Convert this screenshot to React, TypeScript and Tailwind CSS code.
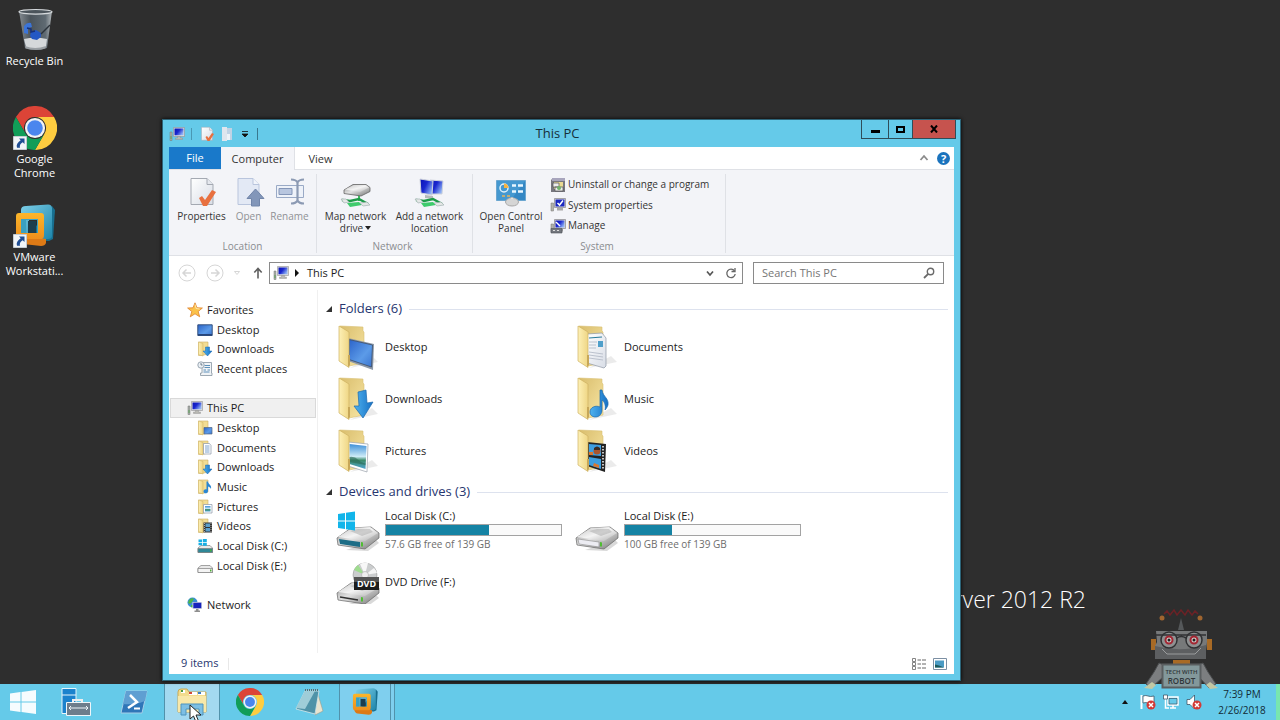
import type { ReactNode } from 'react';

type Kind = 'desktop' | 'documents' | 'downloads' | 'music' | 'pictures' | 'videos';

const folders: { name: string; kind: Kind }[] = [
  { name: 'Desktop', kind: 'desktop' },
  { name: 'Documents', kind: 'documents' },
  { name: 'Downloads', kind: 'downloads' },
  { name: 'Music', kind: 'music' },
  { name: 'Pictures', kind: 'pictures' },
  { name: 'Videos', kind: 'videos' },
];

// Gradients shared by all the icons
function IconDefs() {
  return (
    <svg className="absolute size-0" aria-hidden="true">
      <defs>
        <linearGradient id="leaf" x1="0" x2="1">
          <stop offset="0" stopColor="#fdf0b6" />
          <stop offset="1" stopColor="#efd685" />
        </linearGradient>
        <linearGradient id="back" x1="0" x2="1" y2="1">
          <stop offset="0" stopColor="#d9bd6c" />
          <stop offset="1" stopColor="#f8e6a4" />
        </linearGradient>
        <linearGradient id="screen" x1="0" x2="1" y2="1">
          <stop offset="0" stopColor="#2b63c9" />
          <stop offset="0.6" stopColor="#5c9be8" />
          <stop offset="1" stopColor="#3a74cf" />
        </linearGradient>
        <linearGradient id="crt" x1="0" x2="1" y2="0.6">
          <stop offset="0" stopColor="#0a12b4" />
          <stop offset="0.5" stopColor="#1a27cf" />
          <stop offset="1" stopColor="#8fb2f4" />
        </linearGradient>
        <linearGradient id="arrow" x1="0" x2="1">
          <stop offset="0" stopColor="#4fb2ef" />
          <stop offset="1" stopColor="#1670c4" />
        </linearGradient>
        <linearGradient id="metal" x1="0" x2="1" y2="1">
          <stop offset="0" stopColor="#8f8f8f" />
          <stop offset="0.45" stopColor="#e2e2e2" />
          <stop offset="1" stopColor="#6f6f6f" />
        </linearGradient>
        <linearGradient id="metalTop" x1="0" x2="1" y2="1">
          <stop offset="0" stopColor="#c4c4c4" />
          <stop offset="0.5" stopColor="#f4f4f4" />
          <stop offset="1" stopColor="#b0b0b0" />
        </linearGradient>
        <linearGradient id="photo" x2="0" y2="1">
          <stop offset="0" stopColor="#3d8fd8" />
          <stop offset="0.5" stopColor="#cdebf7" />
          <stop offset="0.65" stopColor="#3c8c6a" />
          <stop offset="1" stopColor="#4ea3cf" />
        </linearGradient>
        <linearGradient id="vmblue" x1="0" x2="1" y2="1">
          <stop offset="0" stopColor="#7dcfe8" />
          <stop offset="1" stopColor="#1e86ab" />
        </linearGradient>
        <linearGradient id="vmorange" x2="0" y2="1">
          <stop offset="0" stopColor="#fbb62a" />
          <stop offset="1" stopColor="#ee8f1c" />
        </linearGradient>
        <linearGradient id="glass" x1="0" x2="1">
          <stop offset="0" stopColor="#8d959c" />
          <stop offset="0.35" stopColor="#4e5860" />
          <stop offset="0.8" stopColor="#65717a" />
          <stop offset="1" stopColor="#c0c6ca" />
        </linearGradient>
        <linearGradient id="paper" x1="0" x2="1" y2="1">
          <stop offset="0" stopColor="#ffffff" />
          <stop offset="1" stopColor="#d8dde6" />
        </linearGradient>
      </defs>
    </svg>
  );
}

function FolderIcon({ kind }: { kind: Kind }) {
  return (
    <svg viewBox="0 0 44 46" className="h-[46px] w-11 shrink-0" aria-hidden="true">
      <path d="M14 44 42 38 36 32Z" fill="#000" opacity="0.08" />
      <path d="M4 2 27 3v4l1 1v31l-15 3Z" fill="url(#back)" stroke="#d8bf72" strokeWidth="0.6" />
      {kind === 'desktop' && (
        <g>
          <path d="m12 14 26 6-1 26-25-9Z" fill="#8d99a8" />
          <path d="m13 15.500 23.500 5.500-1 22L13 35.500Z" fill="url(#screen)" stroke="#3c4c66" strokeWidth="0.8" />
        </g>
      )}
      {kind === 'documents' && (
        <g>
          <path d="m12 10 15-1 4 5v28l-2 2-17-5Z" fill="url(#paper)" stroke="#8e96a3" strokeWidth="0.7" />
          <path d="m14 14 13-1" stroke="#2b7c9c" strokeWidth="1.200" />
          <path d="m14 18 8 0m-8 3 7 0m-7 3 7 0m-7 4 14 2m-14 1 14 2m-14 1 14 2" stroke="#b5bcc8" strokeWidth="0.9" />
          <path d="M23 17h5v6h-5z" fill="#4f9fca" />
        </g>
      )}
      {kind === 'downloads' && (
        <path d="m22 16 8-2 1 13 6-1-10 16-9-12 5 0Z" fill="url(#arrow)" stroke="#1b68ae" strokeWidth="0.700" />
      )}
      {kind === 'music' && (
        <path
          d="M25 14h2c1 7 7 8 6 15-1 3-3 5-3 5 1-5-1-9-3-10v10c0 9-12 9-12 2 0-5 6-7 10-5Z"
          fill="url(#arrow)"
          stroke="#1b68ae"
          strokeWidth="0.700"
        />
      )}
      {kind === 'pictures' && (
        <g>
          <path d="m12 14 20 2-1 28-19-6Z" fill="#fff" stroke="#9aa1aa" strokeWidth="0.700" />
          <path d="m13.500 16 17 2-1 23-16-5Z" fill="url(#photo)" />
          <path d="M13.500 29q5-1 9 3t7 3l0 2-16-3Z" fill="#2c6b58" opacity="0.6" />
        </g>
      )}
      {kind === 'videos' && (
        <g>
          <path d="m12 14 19 2-1 28-18-6Z" fill="#222" />
          <path d="m14 16 12 1v11l-12-1Zm0 13 12 2v10l-12-4Z" fill="#3d9ee0" />
          <circle cx="22" cy="23" r="3.500" fill="#a8552f" />
          <path d="M19 20q3-3 6 0v2h-6Z" fill="#3b2a22" />
          <path d="M14 24h4v3h-4zM19 35l5 2v3l-6-2Z" fill="#d9772f" />
          <path d="M28 18v24" stroke="#eee" strokeWidth="1.600" strokeDasharray="1.500 1.500" />
        </g>
      )}
      <path d="m3 2 10 6v35.500L3 37Z" fill="url(#leaf)" stroke="#cfb262" strokeWidth="0.700" />
      <path d="m12 31 2 0v10l-2 2Z" fill="#c7a758" />
    </svg>
  );
}

function SmallFolder({ kind }: { kind: Kind }) {
  return (
    <svg viewBox="0 0 16 16" className="size-4 shrink-0" aria-hidden="true">
      <path d="M1.500 1h9.500v12l-6 1.500H1.500Z" fill="#f3dd93" stroke="#cdb064" strokeWidth="0.600" />
      <path d="m1.500 1 4.500 1.500V15l-4.500-1.500Z" fill="url(#leaf)" stroke="#cdb064" strokeWidth="0.500" />
      {kind === 'desktop' && <path d="M7 7.500h8V14H7z" fill="url(#screen)" stroke="#57687f" strokeWidth="0.700" />}
      {kind === 'documents' && (
        <g>
          <path d="M6.500 3.500h6l1.500 2V14H6.500z" fill="#fff" stroke="#8a95a6" strokeWidth="0.700" />
          <path d="M8 6h4.500M8 8h4.500M8 10h4.500M8 12h4.500" stroke="#5b8bc0" strokeWidth="0.800" />
        </g>
      )}
      {kind === 'downloads' && (
        <path d="M8.500 6h4v4H15l-4.500 5L6 10h2.500Z" fill="url(#arrow)" stroke="#1b68ae" strokeWidth="0.500" />
      )}
      {kind === 'music' && (
        <path d="M9.500 2.500h1.500c0 3 4 3 3 7.500-1-2-2-2-3-2.500v4.500c0 3-4.500 3-4.500.5 0-2 2-2.500 3-2Z" fill="#2a86d3" />
      )}
      {kind === 'pictures' && (
        <g>
          <path d="M6.500 5.500H15V14H6.500z" fill="#fff" stroke="#8a95a6" strokeWidth="0.700" />
          <path d="M8 7h5.500v5.500H8z" fill="url(#photo)" />
        </g>
      )}
      {kind === 'videos' && (
        <g>
          <path d="M6.500 4.500H15v10H6.500z" fill="#333" />
          <path d="M8.500 5.500H13v3.500H8.500zM8.500 10H13v3.500H8.500z" fill="#5c9fcb" />
          <path d="M14 5v9M7.500 5v9" stroke="#ddd" strokeWidth="0.700" strokeDasharray="1 1" />
        </g>
      )}
    </svg>
  );
}

function PcIcon() {
  return (
    <svg viewBox="0 0 16 16" className="size-4 shrink-0" aria-hidden="true">
      <path d="M1 6h2v8.500H1z" fill="#a9b0aa" stroke="#777" strokeWidth="0.500" />
      <path d="M1.500 10h1v3h-1z" fill="#5da35b" />
      <path d="M4.500 1.500h11v9h-11z" fill="#e3e2dc" stroke="#8f8f96" strokeWidth="0.600" />
      <path d="M5.500 2.500h9v6.800h-9z" fill="url(#crt)" />
      <path d="M8.500 10.500h3V12h2v1.500h-7V12h2z" fill="#b9b9b4" stroke="#8a8a8a" strokeWidth="0.400" />
    </svg>
  );
}

function DriveBody() {
  return (
    <g>
      <path d="m10 42 22 1 11-8-3-3Z" fill="#000" opacity="0.15" />
      <path d="m1 30 14-10 20-1 8 6v5L29 41 2 37Z" fill="url(#metal)" stroke="#666" strokeWidth="0.700" />
      <path d="m2 29 14-9 18-1 8 6-13 8Z" fill="url(#metalTop)" />
      <path d="m14 23 8-2 12 0 3 3-11 4Z" fill="#a8a8a8" opacity="0.5" />
    </g>
  );
}

function DriveIcon({ type }: { type: 'system' | 'disk' | 'dvd' }) {
  return (
    <svg viewBox="0 0 44 44" className="size-11 shrink-0" aria-hidden="true">
      {type === 'dvd' && (
        <g>
          <circle cx="29" cy="15" r="12" fill="#cbcdce" stroke="#9b9b9b" strokeWidth="0.600" />
          <path d="M29 15 18 10a12 12 0 0 1 4-5Z" fill="#9fdc8f" />
          <path d="M29 15 24 4a12 12 0 0 1 8-1Z" fill="#f7f7f7" />
          <path d="m29 15 9-7a12 12 0 0 1 3 5Z" fill="#f5f5f5" />
          <circle cx="29" cy="15" r="3.500" fill="#eee" stroke="#aaa" strokeWidth="0.600" />
        </g>
      )}
      <g transform={type === 'dvd' ? 'translate(0 3)' : undefined}>
        <DriveBody />
        {type === 'system' && <path d="m3 31 21 3v5L4 36Z" fill="#1d6d86" />}
        {type === 'disk' && <path d="m3 31 21 3v5L4 36Z" fill="#ececf2" stroke="#8a8a8a" strokeWidth="0.600" />}
        {type === 'dvd' && <path d="m4 34 18 3" stroke="#333" strokeWidth="1.500" />}
        <path d="m25 34 2 .5v4l-2 0Z" fill="#4fbd32" />
      </g>
      {type === 'system' && (
        <path d="m2 6 7-1v7.500H2Zm8-1.200L19 3.500v9h-9ZM2 13.500h7V21l-7-1Zm8 0h9v9l-9-1.300Z" fill="#12b5ea" />
      )}
      {type === 'dvd' && (
        <g>
          <path d="M18 17h25v13H18z" fill="#1d1d1d" />
          <path d="M18 17h25v5H18z" fill="#555" />
          <text x="30.500" y="27" textAnchor="middle" fontSize="9" fontWeight="700" fill="#fff" fontFamily="Open Sans, sans-serif">
            DVD
          </text>
        </g>
      )}
    </svg>
  );
}

function SmallDrive({ system }: { system?: boolean }) {
  return (
    <svg viewBox="0 0 16 16" className="size-4 shrink-0" aria-hidden="true">
      <path d="m1 10 3-2.500h9L15.500 10v4.500H1Z" fill="#e8e8e8" stroke="#808080" strokeWidth="0.700" />
      <path d="M1 10.500h14.500v4H1z" fill={system ? '#2f8797' : '#f4f4f4'} stroke="#808080" strokeWidth="0.700" />
      <path d="M13 11.500h1.500v2H13z" fill="#4cae35" />
      {system && <path d="M1.500 1.500h3.500V4H1.500zM5.800 1h4v3h-4zM1.500 4.800h3.500v2.500H1.500zM5.800 4.800h4v3h-4z" fill="#18afe4" />}
    </svg>
  );
}

function StarIcon() {
  return (
    <svg viewBox="0 0 16 16" className="size-4 shrink-0" aria-hidden="true">
      <path
        d="m8 .8 2 5 5.400.2-4.200 3.500 1.500 5.300L8 11.800l-4.700 3 1.500-5.300L.6 6 6 5.800Z"
        fill="#fbc24a"
        stroke="#e0812c"
        strokeWidth="0.800"
      />
      <path d="m8 2.500 1.200 4 3.500.5" fill="none" stroke="#fff0bd" strokeWidth="0.800" />
    </svg>
  );
}

function MonitorIcon() {
  return (
    <svg viewBox="0 0 16 16" className="size-4 shrink-0" aria-hidden="true">
      <path d="M.8 2.800h14.400v10.700H.8z" fill="url(#screen)" stroke="#35507e" strokeWidth="1" />
      <path d="M1 12h14v1.500H1z" fill="#27467c" />
    </svg>
  );
}

function RecentIcon() {
  return (
    <svg viewBox="0 0 16 16" className="size-4 shrink-0" aria-hidden="true">
      <path d="M5 1.500h9.500V12H15v2.500H3.500V12H5z" fill="#f0f3f6" stroke="#8794a1" strokeWidth="0.800" />
      <path d="M7.500 4.500h5.500M7.500 6.500h5.500M6.500 9h2.500M10.500 9H13M6.500 11h6" stroke="#4c86b3" strokeWidth="0.900" />
      <circle cx="4" cy="4" r="3.200" fill="#eaf0f5" stroke="#8794a1" strokeWidth="0.800" />
      <path d="M4 2v2h1.500" fill="none" stroke="#456" strokeWidth="0.700" />
    </svg>
  );
}

function NetworkIcon() {
  return (
    <svg viewBox="0 0 16 16" className="size-4 shrink-0" aria-hidden="true">
      <circle cx="5.500" cy="5.500" r="5" fill="#3a8fd6" />
      <path d="M2 3c2-2 4-2 5-1L5 5 3 7 1 6ZM4 8l3 0 0 2-3 .3Z" fill="#4cb54a" />
      <path d="M5.500 5h9.500v7H5.500z" fill="#d9dce4" />
      <path d="M6.300 5.700h8v5.500h-8z" fill="#1723bd" />
      <path d="M9 12h2.500v1.500H13V15H7.500v-1.500H9z" fill="#8f8f8f" />
    </svg>
  );
}

function ChromeIcon({ className }: { className: string }) {
  const sector = 'M3.200 12A24 24 0 0 1 44.800 12H24A12 12 0 0 0 13.600 30Z';
  return (
    <svg viewBox="0 0 48 48" className={className} aria-hidden="true">
      <path d={sector} fill="#dc4437" />
      <path d={sector} fill="#fecd40" transform="rotate(120 24 24)" />
      <path d={sector} fill="#119d58" transform="rotate(240 24 24)" />
      <circle cx="24" cy="24" r="11" fill="#f3f3f3" />
      <circle cx="24" cy="24" r="8.500" fill="#4a86ee" />
    </svg>
  );
}

function VmwareIcon({ className }: { className: string }) {
  return (
    <svg viewBox="0 0 44 44" className={className} aria-hidden="true">
      <path d="m12 36 24 1 4-2 2-29-3-4Z" fill="#176f90" />
      <path
        fillRule="evenodd"
        d="M13 2 35 .5q4 0 4 4V32q0 3-4 3H12q-4 0-4-4V6q0-4 5-4Zm3 9v18h14V11Z"
        fill="url(#vmblue)"
      />
      <path d="M5 34h22l6 1v4q-1 3-5 3l-18-2q-3 0-5-6Z" fill="#dd7a16" />
      <path
        fillRule="evenodd"
        d="M6 9h22q3 0 3 3v19q0 4-3 4H6q-3 0-3-4V12q0-3 3-3Zm2 6v14h17V15Z"
        fill="url(#vmorange)"
      />
      <path fillRule="evenodd" d="M8 15h17v14H8Zm5 1v13h11V16Z" fill="#3aa0c1" />
      <path d="M15 17h8v12h-8z" fill="#1c3d4d" />
    </svg>
  );
}

function ShortcutBadge() {
  return (
    <svg viewBox="0 0 14 14" className="absolute bottom-0 left-0 size-3.5" aria-hidden="true">
      <path d="M.5.5h13v13H.5z" fill="#f1f5f8" stroke="#c4ccd2" />
      <path d="M6 2.500h5.500V8L9.700 6.300C7 8 6.500 9.500 7 11.800H4C3 9 4.500 6.500 7.700 4.300Z" fill="#1f4e94" />
    </svg>
  );
}

function RecycleBinIcon() {
  return (
    <svg viewBox="0 0 44 44" className="size-11" aria-hidden="true">
      <path d="M6 3h33l-5 37q-12 4-22 0Z" fill="url(#glass)" opacity="0.9" />
      <path d="M11 31q11-3 23 0l-1 8q-10 4-20 0Z" fill="#d5d8da" />
      <path d="M12 38q10 4 21 0l-.5 2.500q-9 3-20 0Z" fill="#9a9fa3" />
      <path d="M11 18q3-4 7-3l1 4-4 1 0 6-4-1Z" fill="#3b74d8" />
      <path d="m18 24 5-2 5 3 0 4-4 3-5-1-2-3Z" fill="#2458c4" />
      <path d="m14 20 4 1 0 3 4-1" fill="none" stroke="#16307a" strokeWidth="1.500" />
      <path d="m28 26 9-9" stroke="#2b323a" strokeWidth="1.500" />
      <ellipse cx="22.500" cy="3.800" rx="16.500" ry="2.300" fill="#4b545b" stroke="#d6dadd" strokeWidth="1.200" />
    </svg>
  );
}

function PropertiesIcon({ className }: { className: string }) {
  return (
    <svg viewBox="0 0 32 32" className={className} aria-hidden="true">
      <path d="M5 2.500h16l6 6v20H5z" fill="url(#paper)" stroke="#a4a9b2" />
      <path d="M21 2.500v6h6" fill="#e5e8ee" stroke="#a4a9b2" />
      <path d="m13 22 3-2 3 4 7-10 4 2-9 14h-4Z" fill="#e8703f" />
    </svg>
  );
}

function OpenIcon() {
  return (
    <svg viewBox="0 0 32 32" className="size-8" aria-hidden="true">
      <path d="M5 2.500h15l6 6v20H5z" fill="#e3e9f5" stroke="#b9c5dd" />
      <path d="M20 2.500v6h6" fill="#f2f5fb" stroke="#b9c5dd" />
      <path d="m22.500 13 8.500 9.500h-4.500V30h-8v-7.500H14Z" fill="#8296b9" stroke="#7185a9" />
    </svg>
  );
}

function RenameIcon() {
  return (
    <svg viewBox="0 0 32 32" className="size-8" aria-hidden="true">
      <path d="M2.500 9.500h27v12h-27z" fill="#eef2f9" stroke="#9aaac6" />
      <path d="M5 12.500h13v6H5z" fill="#b8c6df" stroke="#8496b8" />
      <path d="M17 3.500q5 0 6.500 3 1.500-3 6.500-3M17 27.500q5 0 6.500-3 1.500 3 6.500 3M23.500 6v19" fill="none" stroke="#8c9ab3" strokeWidth="2.200" />
    </svg>
  );
}

function Cable() {
  return (
    <g>
      <path d="m2 24 8 1 9-2 9 5" fill="none" stroke="#1e9b49" strokeWidth="2.500" />
      <path d="m7 27 12-1 3 3-12 2Z" fill="#3ecb6c" />
      <path d="m1 23 5 0 3 3-5 1ZM20 27l7-1 3 3-7 1Z" fill="#e4e7e6" stroke="#9aa" strokeWidth="0.600" />
    </g>
  );
}

function MapDriveIcon() {
  return (
    <svg viewBox="0 0 32 32" className="size-8" aria-hidden="true">
      <path d="M19 17v8" stroke="#3cbf5d" strokeWidth="2" />
      <path d="m4 14 9-5.500 13 0 4 3v4L21 20 4 17.500Z" fill="url(#metal)" stroke="#666" strokeWidth="0.800" />
      <path d="m5 13.500 9-4.500h11l4 2.500-9 4.500Z" fill="url(#metalTop)" />
      <Cable />
    </svg>
  );
}

function AddNetworkIcon() {
  return (
    <svg viewBox="0 0 32 32" className="size-8" aria-hidden="true">
      <path d="m16 4 13 1-1 13-11 0Z" fill="url(#crt)" stroke="#cfd3dc" />
      <path d="m6 3 13 2-1 14L7 17Z" fill="url(#crt)" stroke="#cfd3dc" />
      <path d="m11 19 8 1 0 3-8-1Z" fill="#b5b9bb" />
      <Cable />
    </svg>
  );
}

function ControlPanelIcon() {
  return (
    <svg viewBox="0 0 32 32" className="size-8" aria-hidden="true">
      <path d="M1.500 4.500h29v20h-29z" fill="#3487c4" stroke="#6ba6d0" />
      <path d="M2 5h28L16 24H2z" fill="#4598d0" />
      <circle cx="9" cy="12" r="4" fill="none" stroke="#dff1fb" strokeWidth="1.500" />
      <path d="M9 12V7.500A4.500 4.500 0 0 1 13.500 12Z" fill="#f7b443" />
      <path d="M17 9.500h4M23 9.500h5M17 15.500h4M23 15.500h5" stroke="#e8f6ff" strokeWidth="2.500" />
      <path d="M7 20h3M12 20h3" stroke="#e7b45b" strokeWidth="1.500" />
      <ellipse cx="17" cy="26" rx="6.500" ry="4" fill="#d5d5d5" stroke="#a8a8a8" />
      <path d="M14 23q3-3 6 0" fill="#eee" stroke="#bbb" />
    </svg>
  );
}

function SystemIcon({ kind }: { kind: 'uninstall' | 'properties' | 'manage' }) {
  return (
    <svg viewBox="0 0 16 16" className="size-4 shrink-0" aria-hidden="true">
      {kind === 'uninstall' && (
        <g>
          <path d="M1 2.500h14V15H1z" fill="#77777f" />
          <path d="M2 1h13v3H2z" fill="#a8a5bd" />
          <path d="M4 5h9v7H4z" fill="#e9d992" />
          <path d="M3 6h6v4H3zM5 10h8v4H5z" fill="#ececec" stroke="#555" strokeWidth="0.700" />
          <circle cx="9" cy="11" r="2" fill="#6fb26a" />
        </g>
      )}
      {kind !== 'uninstall' && (
        <g>
          <path d="M1 6h2.500v8H1z" fill="#b3b3ab" stroke="#777" strokeWidth="0.500" />
          <path d="M4.500 1.500h11v9h-11z" fill="#dcdbd6" stroke="#85858c" strokeWidth="0.700" />
          <path d="M5.500 2.500h9v7h-9z" fill={kind === 'manage' ? 'url(#crt)' : '#1a27c0'} />
          <path d="M7 11h6v2.500H7z" fill="#a9a9a9" />
        </g>
      )}
      {kind === 'properties' && <path d="m7.500 6 2 2 3.500-4.500" fill="none" stroke="#fff" strokeWidth="1.500" />}
      {kind === 'manage' && (
        <g>
          <path d="M1 10.500h11V15H1z" fill="#73777e" stroke="#4f5257" strokeWidth="0.600" />
          <path d="M3 12.500h2M7 12.500h2" stroke="#ddd" />
          <path d="m6 4 4 4" stroke="#fff" strokeWidth="1.500" />
        </g>
      )}
    </svg>
  );
}

function RobotLogo() {
  return (
    <svg viewBox="0 0 78 82" className="absolute right-[60px] bottom-[-6px] z-10 h-[82px] w-[78px]" aria-hidden="true">
      <path d="m22 6 3-3 3 4 4-5 3 5 4-5 4 5 3-5 4 5 3-4 3 3" fill="none" stroke="#6b2226" strokeWidth="1.500" />
      <circle cx="20" cy="10" r="2.500" fill="#a0652f" />
      <circle cx="58" cy="10" r="2.500" fill="#a0652f" />
      <path d="m36 22 3-12 3 12Z" fill="#55585a" />
      <path d="M9 31h5v11H9zM65 31h5v11h-5z" fill="#a86a25" />
      <path d="M14 23h51v11l-2 17H13V38l2-4Z" fill="#77797a" />
      <path d="M13 38q26 7 51-1v14H13Z" fill="#5d5f61" />
      <path d="m20 41 5 5h28l6-6" fill="none" stroke="#9a9c9d" />
      <g fill="#8f9192" stroke="#303133" strokeWidth="1.500">
        <circle cx="27" cy="32" r="8" />
        <circle cx="52" cy="32" r="8" />
        <path d="M14 27h50M35 30q4-3 9 0" fill="none" />
      </g>
      <g fill="#d6cfcf" stroke="#a32632" strokeWidth="2">
        <circle cx="27" cy="32" r="3.500" />
        <circle cx="52" cy="32" r="3.500" />
      </g>
      <circle cx="27" cy="32" r="1.500" fill="#222" />
      <circle cx="52" cy="32" r="1.500" fill="#222" />
      <path d="M31 52h17v6H31z" fill="#a86a25" />
      <path d="m17 55 7 3-3 11-12 11-5-4 8-12ZM61 55l-7 3 3 11 10 11 7-4-8-12Z" fill="#7c7e80" stroke="#4b4d4f" />
      <path d="m2 80 8-6 4 3-4 4ZM76 80l-8-6-4 3 4 4Z" fill="#c3c8a4" />
      <path d="M20.500 56.500h38v23h-38z" fill="#83989b" stroke="#5a5e60" strokeWidth="2" />
      <g textAnchor="middle" fontFamily="Open Sans, sans-serif" fontWeight="600" fill="#303639">
        <text x="39.500" y="66" fontSize="6">
          TECH WITH
        </text>
        <text x="39.500" y="76" fontSize="8">
          ROBOT
        </text>
      </g>
    </svg>
  );
}

function DesktopIcon({ label, shortcut, children }: { label: string; shortcut?: boolean; children: ReactNode }) {
  return (
    <button className="flex h-[98px] w-full flex-col items-center gap-0.5 text-[11px] leading-[14px] text-white">
      <span className="relative size-11">
        {children}
        {shortcut && <ShortcutBadge />}
      </span>
      <span className="px-1">{label}</span>
    </button>
  );
}

function RibbonGroup({ label, className, children }: { label: string; className: string; children: ReactNode }) {
  return (
    <section className={`flex flex-col justify-between border-r border-[#dfe1e6] ${className}`}>
      <div className="flex h-[62px] justify-center">{children}</div>
      <h2 className="text-center text-[10px] leading-[14px] text-[#8a8c90]">{label}</h2>
    </section>
  );
}

function RibbonButton({
  icon,
  disabled,
  className,
  children,
}: {
  icon: ReactNode;
  disabled?: boolean;
  className: string;
  children: ReactNode;
}) {
  return (
    <button
      disabled={disabled}
      className={`flex shrink-0 flex-col items-center gap-0.5 pt-0.5 text-[10px] leading-3 whitespace-nowrap text-[#333] disabled:text-[#8f9195] ${className}`}
    >
      {icon}
      <span>{children}</span>
    </button>
  );
}

function NavItem({
  icon,
  root,
  selected,
  children,
}: {
  icon: ReactNode;
  root?: boolean;
  selected?: boolean;
  children: ReactNode;
}) {
  return (
    <li className="flex">
      <a
        href="#"
        aria-current={selected ? 'page' : undefined}
        className={`flex flex-1 items-center gap-1 border ${root ? 'pl-4' : 'pl-[26px]'} ${
          selected ? 'border-[#d9d9d9] bg-[#f0f0f0]' : 'border-transparent'
        }`}
      >
        {icon}
        {children}
      </a>
    </li>
  );
}

function SectionTitle({ children }: { children: ReactNode }) {
  return (
    <h2 className="mb-0.5 flex h-5 items-center gap-[7px] text-[13px] text-[#27366f]">
      <svg viewBox="0 0 6 6" className="size-1.5" aria-hidden="true">
        <path d="M6 0v6H0Z" fill="#333" />
      </svg>
      {children}
      <span className="h-px flex-1 bg-[#dde2ee]" />
    </h2>
  );
}

function Drive({ name, free, used }: { name: string; free: string; used: number }) {
  return (
    <a href="#" className="flex h-[52px] items-center gap-[5px]">
      <DriveIcon type={name.includes('C:') ? 'system' : 'disk'} />
      <span className="w-[177px]">
        <span className="block leading-4">{name}</span>
        <span
          role="progressbar"
          aria-label={name}
          aria-valuenow={used}
          className="block h-3 border border-[#a3a3a3] bg-[#fafafa]"
        >
          <span className="block h-full bg-[#1583a4]" style={{ width: `${used}%` }} />
        </span>
        <span className="block text-[10px] leading-4 text-[#6d6d6d]">{free}</span>
      </span>
    </a>
  );
}

function ExplorerWindow() {
  return (
    <main className="absolute top-[119px] left-[162px] z-10 w-[799px] border border-[#2c6478] bg-[#65cae9] text-[11px] text-[#1c1c1c] shadow-[0_0_4px_#000]">
      <header className="flex h-[27px] text-black">
        <div className="flex w-[97px] items-center gap-1 pl-1.5">
          <PcIcon />
          <span className="mr-[3px] ml-0.5 h-3 w-px shrink-0 bg-[#4a98b3]" />
          <button aria-label="Properties" className="shrink-0">
            <PropertiesIcon className="size-4" />
          </button>
          <button aria-label="New folder" className="shrink-0">
            <svg viewBox="0 0 16 16" className="size-4">
              <path d="M3 1h5v14H3z" fill="#dfe6ee" />
              <path d="M8 2h5v12H8z" fill="#c0d3e5" />
              <path d="M8 8h3v6H8z" fill="#eef3f8" />
            </svg>
          </button>
          <button aria-label="Customize Quick Access Toolbar" className="ml-0.5 shrink-0">
            <svg viewBox="0 0 8 8" className="size-2">
              <path d="M1 1.500h6M1 4h6L4 7Z" fill="#111" stroke="#111" strokeWidth="0.800" />
            </svg>
          </button>
          <span className="ml-1 h-3 w-px shrink-0 bg-[#39788f]" />
        </div>
        <h1 className="flex-1 pr-1.5 text-center text-[13px] leading-[27px] text-[#16303a]">This PC</h1>
        <div className="mr-1 flex h-[19px] border border-t-0 border-[#2f4d59]">
          <button aria-label="Minimize" className="flex w-[26px] items-center justify-center pt-1">
            <span className="h-[3px] w-[9px] bg-black" />
          </button>
          <button aria-label="Maximize" className="flex w-[25px] items-center justify-center border-x border-[#2f4d59]">
            <span className="h-[7px] w-[9px] border-2 border-black" />
          </button>
          <button aria-label="Close" className="flex w-[42px] items-center justify-center bg-[#c6534e]">
            <svg viewBox="0 0 8 8" className="size-2">
              <path d="m1 .5 6 7M7 .5l-6 7" stroke="#000" strokeWidth="2" />
            </svg>
          </button>
        </div>
      </header>

      <div className="mx-1.5 mb-1.5 bg-white">
        <div className="flex h-[23px] items-stretch border-b border-[#dfe1e6]">
          <button className="w-[52px] bg-[#1979ca] text-white">File</button>
          <button className="-mb-px w-[74px] border-r border-[#dfe1e6] bg-[#f3f4f8] pt-0.5 text-[#333]">Computer</button>
          <button className="w-[51px] pt-0.5 text-[#333]">View</button>
          <div className="ml-auto flex items-center gap-2 pr-1">
            <button aria-label="Minimize the Ribbon">
              <svg viewBox="0 0 10 10" className="size-2.5">
                <path d="M1.500 7 5 3l3.500 4" fill="none" stroke="#8b8b8b" strokeWidth="1.800" />
              </svg>
            </button>
            <button aria-label="Help" className="size-[13px] rounded-full bg-[#1b73bd] text-[11px] leading-[13px] font-bold text-white">
              ?
            </button>
          </div>
        </div>

        <div className="flex h-[86px] border-b border-[#dfe1e6] bg-[#f3f4f8] pt-1 pb-0.5">
          <RibbonGroup label="Location" className="w-[148px]">
            <RibbonButton className="w-14" icon={<PropertiesIcon className="size-8" />}>
              Properties
            </RibbonButton>
            <RibbonButton disabled className="w-[38px]" icon={<OpenIcon />}>
              Open
            </RibbonButton>
            <RibbonButton disabled className="w-11" icon={<RenameIcon />}>
              Rename
            </RibbonButton>
          </RibbonGroup>
          <RibbonGroup label="Network" className="w-[156px] pr-1">
            <RibbonButton className="w-[74px]" icon={<MapDriveIcon />}>
              Map network
              <br />
              <span className="inline-flex items-center gap-0.5">
                drive
                <svg viewBox="0 0 6 4" className="h-1 w-1.5" aria-hidden="true">
                  <path d="M0 0h6L3 4Z" fill="#222" />
                </svg>
              </span>
            </RibbonButton>
            <RibbonButton className="w-[74px]" icon={<AddNetworkIcon />}>
              Add a network
              <br />
              location
            </RibbonButton>
          </RibbonGroup>
          <RibbonGroup label="System" className="w-[253px] pr-1">
            <RibbonButton className="w-[72px]" icon={<ControlPanelIcon />}>
              Open Control
              <br />
              Panel
            </RibbonButton>
            <div className="flex w-[172px] flex-col pl-[3px] text-[10px] text-[#333]">
              <button className="flex h-[21px] items-center gap-0.5 whitespace-nowrap">
                <SystemIcon kind="uninstall" />
                Uninstall or change a program
              </button>
              <button className="flex h-5 items-center gap-0.5">
                <SystemIcon kind="properties" />
                System properties
              </button>
              <button className="flex h-[21px] items-center gap-0.5">
                <SystemIcon kind="manage" />
                Manage
              </button>
            </div>
          </RibbonGroup>
        </div>

        <div className="flex h-[34px] items-center pr-2.5 pl-[9px]">
          <button aria-label="Back" disabled>
            <svg viewBox="0 0 18 18" className="size-[18px]">
              <circle cx="9" cy="9" r="8" fill="none" stroke="#d6d6d6" />
              <path d="M13 9H5.500M8.500 5.500 5 9l3.500 3.500" fill="none" stroke="#d6d6d6" strokeWidth="1.500" />
            </svg>
          </button>
          <button aria-label="Forward" disabled className="ml-2.5">
            <svg viewBox="0 0 18 18" className="size-[18px]">
              <circle cx="9" cy="9" r="8" fill="none" stroke="#d6d6d6" />
              <path d="M5 9h7.500M9.500 5.500 13 9l-3.500 3.500" fill="none" stroke="#d6d6d6" strokeWidth="1.500" />
            </svg>
          </button>
          <button aria-label="Recent locations" className="ml-2.5">
            <svg viewBox="0 0 6 6" className="size-1.5">
              <path d="M.5 1.500h5L3 4.500Z" fill="none" stroke="#ccc" strokeWidth="0.800" />
            </svg>
          </button>
          <button aria-label="Up" className="ml-3">
            <svg viewBox="0 0 12 12" className="size-3">
              <path d="M6 11.500V1.500M2.300 5.500 6 1.500l3.700 4" fill="none" stroke="#5f5f5f" strokeWidth="1.600" />
            </svg>
          </button>
          <div className="ml-[5px] flex h-[22px] flex-1 items-center border border-[#8a8a8a] pr-[5px] pl-[3px]">
            <PcIcon />
            <svg viewBox="0 0 6 8" className="ml-[5px] h-2 w-1.5" aria-hidden="true">
              <path d="m1 0 4 4-4 4Z" fill="#111" />
            </svg>
            <span className="ml-[7px] flex-1">This PC</span>
            <button aria-label="Previous locations">
              <svg viewBox="0 0 10 10" className="size-2.5">
                <path d="M2 3.500 5 7l3-3.500" fill="none" stroke="#555" strokeWidth="1.700" />
              </svg>
            </button>
            <button aria-label="Refresh" className="ml-2.5">
              <svg viewBox="0 0 12 12" className="size-3">
                <path d="M9.500 4A4.200 4.200 0 1 0 10.200 7" fill="none" stroke="#666" strokeWidth="1.300" />
                <path d="M6.500 4.500H10V1" fill="none" stroke="#666" strokeWidth="1.300" />
              </svg>
            </button>
          </div>
          <label className="ml-2.5 flex h-[22px] w-[191px] items-center border border-[#8a8a8a] px-2">
            <input
              type="search"
              aria-label="Search This PC"
              placeholder="Search This PC"
              className="min-w-0 flex-1 bg-transparent outline-none placeholder:text-[#767676]"
            />
            <svg viewBox="0 0 12 12" className="size-3" aria-hidden="true">
              <circle cx="7.500" cy="4.500" r="3.200" fill="none" stroke="#6a6a6a" strokeWidth="1.400" />
              <path d="M5.200 6.800 1 11" stroke="#6a6a6a" strokeWidth="1.800" />
            </svg>
          </label>
        </div>

        <div className="flex h-[363px]">
          <nav aria-label="Folders" className="w-[149px] border-r border-[#f0f0f0] pt-2.5 pr-px pl-px">
            <ul className="grid h-[315px] grid-rows-[repeat(16,1fr)] leading-4">
              <NavItem root icon={<StarIcon />}>
                Favorites
              </NavItem>
              <NavItem icon={<MonitorIcon />}>Desktop</NavItem>
              <NavItem icon={<SmallFolder kind="downloads" />}>Downloads</NavItem>
              <NavItem icon={<RecentIcon />}>Recent places</NavItem>
              <li aria-hidden="true" />
              <NavItem root selected icon={<PcIcon />}>
                This PC
              </NavItem>
              {folders.map((f) => (
                <NavItem key={f.kind} icon={<SmallFolder kind={f.kind} />}>
                  {f.name}
                </NavItem>
              ))}
              <NavItem icon={<SmallDrive system />}>Local Disk (C:)</NavItem>
              <NavItem icon={<SmallDrive />}>Local Disk (E:)</NavItem>
              <li aria-hidden="true" />
              <NavItem root icon={<NetworkIcon />}>
                Network
              </NavItem>
            </ul>
          </nav>

          <div className="flex-1 pt-[9px] pr-1.5 pl-2">
            <SectionTitle>Folders (6)</SectionTitle>
            <div className="mb-[5px] grid grid-cols-[239px_239px] pl-2.5">
              {folders.map((f) => (
                <a key={f.kind} href="#" className="flex h-[52px] items-center gap-[5px]">
                  <FolderIcon kind={f.kind} />
                  {f.name}
                </a>
              ))}
            </div>
            <SectionTitle>Devices and drives (3)</SectionTitle>
            <div className="grid grid-cols-[239px_239px] pl-2.5">
              <Drive name="Local Disk (C:)" free="57.6 GB free of 139 GB" used={59} />
              <Drive name="Local Disk (E:)" free="100 GB free of 139 GB" used={27} />
              <a href="#" className="flex h-[52px] items-center gap-[5px]">
                <DriveIcon type="dvd" />
                DVD Drive (F:)
              </a>
            </div>
          </div>
        </div>

        <footer className="flex h-[21px] items-center pr-[7px] pl-3 text-[#27366f]">
          <span>9 items</span>
          <span className="ml-2.5 h-3 w-px bg-[#e8e8e8]" />
          <button aria-label="Details" className="ml-auto">
            <svg viewBox="0 0 14 12" className="h-3 w-3.5">
              <path d="M.5.5h3v3h-3zM.5 4.500h3v3h-3zM.5 8.500h3v3h-3z" fill="none" stroke="#777" strokeWidth="0.900" />
              <path d="M5.500 2h3.500M10 2h4M5.500 6h3.500M10 6h4M5.500 10h3.500M10 10h4" stroke="#666" />
            </svg>
          </button>
          <button aria-label="Large icons" className="ml-[7px]">
            <svg viewBox="0 0 14 12" className="h-3 w-3.5">
              <path d="M.5.5h13v11H.5z" fill="#fff" stroke="#7c8fa3" />
              <path d="M2 2.500h9v7H2z" fill="#4a9bc4" />
              <path d="m2 9.500 0-3 4 1 5 2Z" fill="#1c5a5c" />
            </svg>
          </button>
        </footer>
      </div>
    </main>
  );
}

function Taskbar() {
  return (
    <footer className="relative flex h-9 items-stretch bg-[#65cae9] text-[#132b35]">
      <button aria-label="Start" className="flex w-[46px] items-center justify-center">
        <svg viewBox="0 0 26 24" className="h-6 w-[26px]">
          <path d="m0 3.500 10.500-1.500v9.500H0Zm11.500-1.600L26 0v11.500H11.500ZM0 12.500h10.500V22L0 20.500Zm11.500 0H26V24l-14.500-1.900Z" fill="#f6fcfe" />
        </svg>
      </button>
      <button aria-label="Server Manager" className="flex w-[60px] items-center justify-center">
        <svg viewBox="0 0 30 30" className="size-[30px]">
          <path d="M1 1.500h14v25H1z" fill="#1b82cd" stroke="#e6f5fb" />
          <path d="M1 8h14" stroke="#e6f5fb" />
          <path d="M12 15v-2h9v2" fill="none" stroke="#eee" strokeWidth="2" />
          <path d="M5.500 15.500h24v13h-24z" fill="#6d7d8c" stroke="#eef6fa" />
          <path d="M8 21h19m-17-2-2 2 2 2m15-4 2 2-2 2" fill="none" stroke="#eef6fa" />
        </svg>
      </button>
      <button aria-label="Windows PowerShell" className="flex w-14 items-center justify-center">
        <svg viewBox="0 0 28 24" className="h-6 w-7">
          <path d="M6 1h21l-5 22H1Z" fill="#2f76b8" stroke="#a6cfe8" />
          <path d="M6 1h21l-2 10q-10 4-22 3Z" fill="#5f9fd2" />
          <path d="m10 5 7 7-9 6" fill="none" stroke="#fff" strokeWidth="2.500" />
          <path d="M14 18.500h6" stroke="#fff" strokeWidth="2" />
        </svg>
      </button>
      <button
        aria-label="File Explorer"
        className="ml-0.5 flex w-14 items-center justify-center border-x border-[#5192ab] bg-[#a3d9f0]"
      >
        <svg viewBox="0 0 32 30" className="h-[30px] w-8">
          <path d="M2 5q0-3 3-3h6l2 3h17v20H2Z" fill="#f2dc8d" stroke="#c9a957" />
          <path d="M5 3h4v3H5zM13 5h8v3h-8zM22 5h7v3h-7z" fill="#fff" />
          <path d="M5 3h2v2H5z" fill="#4c9d45" />
          <path d="M13 5h3v2h-3z" fill="#d24a38" />
          <path d="M22 5h3v2h-3z" fill="#3b7dc1" />
          <path d="M2 9h28v16H2z" fill="#f8e8a9" />
          <path d="M5 17h22v11h-4v-6H10v6H5z" fill="#7dbfe4" stroke="#4f94bd" />
        </svg>
      </button>
      <button aria-label="Google Chrome" className="flex w-[60px] items-center justify-center">
        <ChromeIcon className="size-7" />
      </button>
      <button aria-label="Notepad" className="flex w-[59px] items-center justify-center">
        <svg viewBox="0 0 30 28" className="h-7 w-[30px]">
          <path d="m22 3 6 20-8 4Z" fill="#e8e4cf" stroke="#9c9c8b" strokeWidth="0.600" />
          <path d="M10 3h14l-4 23-19-5Z" fill="#4f93a8" stroke="#d5e8ec" strokeWidth="0.800" />
          <path d="m10 3 10 0-10 18-9-1Z" fill="#9fcdd8" />
          <path d="M10 2h14" stroke="#5c6a6e" strokeWidth="2" strokeDasharray="1 1" />
        </svg>
      </button>
      <button
        aria-label="VMware Workstation"
        className="flex w-[52px] items-center justify-center border-x border-[#5192ab] bg-[#7fcfee]"
      >
        <VmwareIcon className="size-7" />
      </button>
      <span className="w-1 border-r border-[#5192ab] bg-[#7fcfee]" />

      <div className="ml-auto flex items-center gap-[7px]">
        <button aria-label="Show hidden icons" className="mr-1">
          <svg viewBox="0 0 8 6" className="h-1.5 w-2">
            <path d="M1 5h6L4 1Z" fill="#111" />
          </svg>
        </button>
        <svg viewBox="0 0 16 16" className="size-4" aria-label="Action Center">
          <path d="M1.500 1v14" stroke="#fff" strokeWidth="2" />
          <path d="M3 2q3-1 5 0t6 0v7q-4 1-6 0t-5 0Z" fill="#fff" stroke="#345" strokeWidth="0.700" />
          <circle cx="11" cy="11" r="4.500" fill="#d33a36" />
          <path d="m9 9 4 4m0-4-4 4" stroke="#fff" strokeWidth="1.500" />
        </svg>
        <svg viewBox="0 0 16 16" className="size-4" aria-label="Network">
          <path d="M5 3h10v8H5z" fill="#65cae9" stroke="#fff" strokeWidth="1.500" />
          <path d="M7 14h6M10 11v3M2.500 5v9H6" fill="none" stroke="#fff" strokeWidth="1.500" />
          <path d="M.5 1h4v4h-4z" fill="#fff" stroke="#345" strokeWidth="0.700" />
          <path d="M6 4.500h8v5.500H6z" fill="none" stroke="#345" strokeWidth="0.600" />
        </svg>
        <svg viewBox="0 0 16 16" className="size-4" aria-label="Volume muted">
          <path d="M1 5.500h3L8.500 1v14L4 10.500H1Z" fill="#fff" stroke="#345" strokeWidth="0.700" />
          <circle cx="11" cy="11" r="4.500" fill="#d33a36" />
          <path d="m9 9 4 4m0-4-4 4" stroke="#fff" strokeWidth="1.500" />
        </svg>
        <time className="ml-1.5 w-[54px] text-center text-[10px] leading-4">
          7:39 PM
          <br />
          2/26/2018
        </time>
        <span className="h-full w-1 bg-[#78e6ae]" />
      </div>

      <svg viewBox="0 0 13 19" className="absolute top-5 left-[189px] h-[19px] w-[13px]" aria-hidden="true">
        <path d="M1 1v14l3.500-3 2.500 6 2.500-1L7 11h5Z" fill="#fff" stroke="#222" />
      </svg>
    </footer>
  );
}

export function App() {
  return (
    <div className="flex min-h-screen flex-col overflow-hidden bg-[#2e2e2e] font-['Open_Sans','Noto_Sans',sans-serif]">
      <IconDefs />
      <div className="relative flex-1">
        <div className="w-[69px] pt-2">
          <DesktopIcon label="Recycle Bin">
            <RecycleBinIcon />
          </DesktopIcon>
          <DesktopIcon label="Google Chrome" shortcut>
            <ChromeIcon className="size-11" />
          </DesktopIcon>
          <DesktopIcon label="VMware Workstati..." shortcut>
            <VmwareIcon className="size-11" />
          </DesktopIcon>
        </div>

        <p className="absolute right-[194px] bottom-[69px] text-[23px] leading-8 font-light text-white">
          Windows Server 2012 R2
        </p>
        <ExplorerWindow />
        <RobotLogo />
      </div>
      <Taskbar />
    </div>
  );
}

export default App;
